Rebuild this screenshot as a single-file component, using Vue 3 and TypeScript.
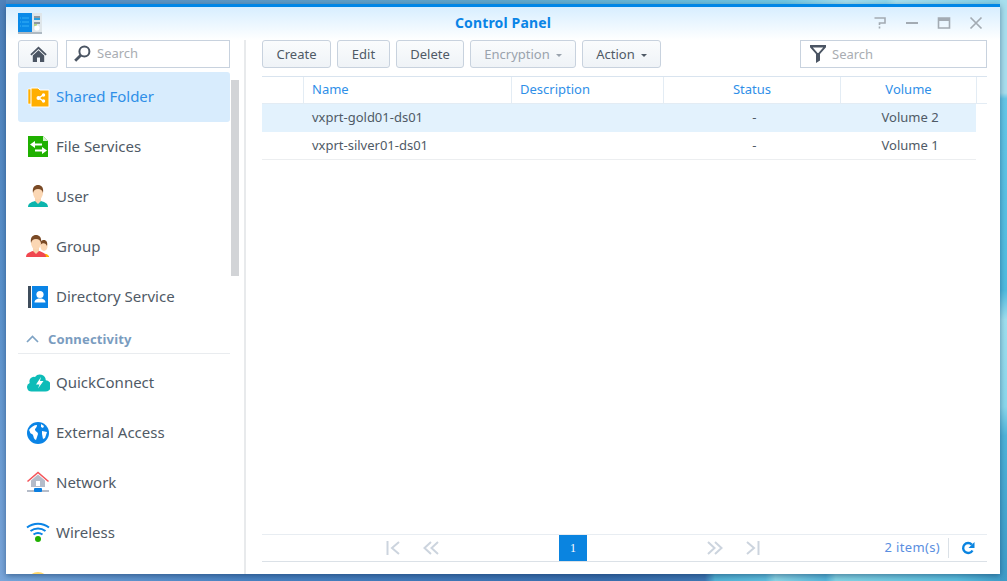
<template>
  <div class="desktop">
    <div class="wall wall-top"></div>
    <div class="wall wall-bottom"></div>
    <div class="wall wall-left"></div>
    <div class="wall wall-right"></div>
    <div class="window">
      <header class="titlebar">
        <svg class="app-logo" width="24" height="21" viewBox="0 0 24 21">
          <rect x="0" y="0" width="14" height="19" fill="#0a8ae8" />
          <rect x="14" y="0" width="10" height="19" fill="#dfe6ea" />
          <rect x="0" y="19" width="24" height="2" fill="#aeb9c2" />
          <path d="M2 5h9M2 9h9M2 13h9" stroke="#37b1f6" stroke-width="1" stroke-dasharray="1 1 7 1" />
          <path d="M16 4h6" stroke="#3e4a57" stroke-width="1" />
          <path d="M16 6h6" stroke="#2aa0df" stroke-width="2" />
          <path d="M16 10h6" stroke="#3e4a57" stroke-width="1" />
          <path d="M16 12h3" stroke="#86c21f" stroke-width="1" />
          <circle cx="19" cy="15" r="2.6" fill="#fff" />
        </svg>
        <span class="title">Control Panel</span>
        <div class="win-buttons">
          <svg width="14" height="14" viewBox="0 0 14 14"><path d="M1.500 2h10.500v5H6.500v2M6.500 10.500v2" fill="none" stroke="#a3abb3" stroke-width="1.600" /></svg>
          <svg width="14" height="14" viewBox="0 0 14 14"><path d="M1 7h12" stroke="#a3abb3" stroke-width="2" /></svg>
          <svg width="14" height="14" viewBox="0 0 14 14"><path d="M1.500 2h11v10h-11z" fill="none" stroke="#a3abb3" stroke-width="1.600" /><path d="M1 3.500h12" stroke="#a3abb3" stroke-width="3" /></svg>
          <svg width="14" height="14" viewBox="0 0 14 14"><path d="M1.500 1.500l11 11M12.500 1.500l-11 11" stroke="#a3abb3" stroke-width="1.700" /></svg>
        </div>
      </header>

      <div class="body">
        <aside class="sidebar">
          <div class="side-tools">
            <button class="btn home-btn" type="button">
              <svg width="17" height="16" viewBox="0 0 17 16"><path d="M8.500 0.500L0.300 8.200l1.200 1.200L8.500 3l7 6.400 1.200-1.200z" fill="#4b5563" /><path d="M2.800 9.400L8.500 4.200l5.700 5.200V16H10v-4.500H7V16H2.800z" fill="#4b5563" /></svg>
            </button>
            <label class="search side-search">
              <svg width="17" height="17" viewBox="0 0 17 17"><circle cx="10.400" cy="6.600" r="5" fill="none" stroke="#4b5563" stroke-width="2" /><path d="M6.800 10.200L1.200 15.800" stroke="#4b5563" stroke-width="2.800" /></svg>
              <span>Search</span>
            </label>
          </div>

          <nav class="nav">
            <template v-for="item in navItems" :key="item.label">
              <div v-if="item.section" class="section">
                <svg width="13" height="8" viewBox="0 0 13 8"><path d="M1 7l5.500-5.500L12 7" fill="none" stroke="#7fa3c4" stroke-width="1.700" /></svg>
                <span>{{ item.label }}</span>
              </div>
              <div v-else class="nav-item" :class="{ active: item.active }">
                <svg class="nav-icon" width="24" height="24" viewBox="0 0 24 24" v-html="item.icon"></svg>
                <span>{{ item.label }}</span>
              </div>
            </template>
          </nav>
          <div class="scroll-thumb"></div>
        </aside>

        <main class="content">
          <div class="toolbar">
            <button v-for="b in buttons" :key="b.label" class="btn tool-btn" :class="[b.cls, { disabled: b.disabled }]" type="button">
              {{ b.label }}
              <i v-if="b.caret" class="caret"></i>
            </button>
            <label class="search filter">
              <svg width="16" height="18" viewBox="0 0 16 18"><path d="M0 0h16v2.200L10 9v6.500L6 18V9L0 2.200zM2.800 2.400L7.600 8h.8l4.800-5.600z" fill="#4b5563" fill-rule="evenodd" /></svg>
              <span>Search</span>
            </label>
          </div>

          <div class="grid">
            <div class="row head">
              <div class="cell c-check"></div>
              <div class="cell c-name">Name</div>
              <div class="cell c-desc">Description</div>
              <div class="cell c-status">Status</div>
              <div class="cell c-vol">Volume</div>
            </div>
            <div v-for="r in rows" :key="r.name" class="row data" :class="{ selected: r.selected }">
              <div class="cell c-check"></div>
              <div class="cell c-name">{{ r.name }}</div>
              <div class="cell c-desc"></div>
              <div class="cell c-status">-</div>
              <div class="cell c-vol">{{ r.volume }}</div>
            </div>
          </div>

          <footer class="pager">
            <div class="page-btn">
              <svg width="14" height="14" viewBox="0 0 14 14"><path d="M1.500 0v14" stroke="#ccd4de" stroke-width="2" /><path d="M13 1L6 7l7 6" fill="none" stroke="#ccd4de" stroke-width="2" /></svg>
            </div>
            <div class="page-btn">
              <svg width="16" height="14" viewBox="0 0 16 14"><path d="M8 1L1.500 7 8 13M15 1L8.500 7l6.500 6" fill="none" stroke="#ccd4de" stroke-width="2" /></svg>
            </div>
            <div class="page-mid"><span class="page-num">1</span></div>
            <div class="page-btn">
              <svg width="16" height="14" viewBox="0 0 16 14"><path d="M1 1l6.500 6L1 13M8 1l6.500 6L8 13" fill="none" stroke="#ccd4de" stroke-width="2" /></svg>
            </div>
            <div class="page-btn">
              <svg width="14" height="14" viewBox="0 0 14 14"><path d="M12.500 0v14" stroke="#ccd4de" stroke-width="2" /><path d="M1 1l7 6-7 6" fill="none" stroke="#ccd4de" stroke-width="2" /></svg>
            </div>
            <div class="page-info">2 item(s)</div>
            <div class="page-refresh">
              <svg width="14" height="14" viewBox="0 0 14 14"><path d="M11.500 9.500A5 5 0 1 1 10.800 3.600" fill="none" stroke="#0a84e0" stroke-width="2.400" /><path d="M13.500 1v6h-6z" fill="#0a84e0" /></svg>
            </div>
          </footer>
        </main>
      </div>
    </div>
  </div>
</template>

<script setup lang="ts">
interface NavItem {
  label: string;
  icon?: string;
  active?: boolean;
  section?: boolean;
}

const face = (cx: number, cy: number, shirt: string) => `
  <path d="M${cx - 10} ${cy + 17}c0-4 4-5 7-6h6c3 1 7 2 7 6z" fill="${shirt}"/>
  <path d="M${cx - 3} ${cy + 8}h6v3l-3 3-3-3z" fill="#f9d3ae"/>
  <ellipse cx="${cx}" cy="${cy + 3}" rx="5" ry="6.500" fill="#fbd7b4"/>
  <path d="M${cx - 5} ${cy + 3}c-1-6 2-8 5-8s6 2 5 8c-1-3-2-4-5-4s-4 1-5 4z" fill="#7a4a26"/>`;

const navItems: NavItem[] = [
  {
    label: "Shared Folder",
    active: true,
    icon: `<path d="M2 4h5l1 1v14H2z" fill="#ffae00" stroke="#fff" stroke-width=".6"/>
      <path d="M5 3h7l2 2h9v17H5z" fill="#ffae00" stroke="#fff" stroke-width="1"/>
      <path d="M17 10l-4 3 4 3" fill="none" stroke="#fff" stroke-width="1.400"/>
      <circle cx="12.500" cy="13" r="2" fill="#fff"/><circle cx="17.500" cy="10" r="1.700" fill="#fff"/><circle cx="17.500" cy="16" r="1.700" fill="#fff"/>`,
  },
  {
    label: "File Services",
    icon: `<path d="M2 1h15l5 5v16H2z" fill="#1fb000"/><path d="M17 1v5h5z" fill="#d8f1d0"/>
      <path d="M8 9.500h8M9 15.500h8" stroke="#fff" stroke-width="2"/>
      <path d="M9 6L4 9.500 9 13zM16 12l5 3.500-5 3.500z" fill="#fff"/>`,
  },
  { label: "User", icon: face(12, 5, "#0cb5ad") },
  {
    label: "Group",
    icon: `<path d="M15 22c2-4 5-4 8-1v1z" fill="#ffae00"/>
      <ellipse cx="18" cy="11" rx="3.600" ry="5" fill="#fbd7b4"/>
      <path d="M14 10c0-4 2-5 4-5s4 2 3 6c-1-3-4-4-7-1z" fill="#7a4a26"/>${face(10, 5, "#f0474f")}`,
  },
  {
    label: "Directory Service",
    icon: `<rect x="2" y="1" width="3" height="22" fill="#3f4d5c"/><rect x="6" y="1" width="16" height="22" fill="#0a84e6"/>
      <circle cx="14" cy="9.500" r="3.600" fill="#fff"/><path d="M8.500 17.500c0-3 3-3.500 3.500-4h4c.5.5 3.500 1 3.500 4z" fill="#fff"/>`,
  },
  { label: "Connectivity", section: true },
  {
    label: "QuickConnect",
    icon: `<path d="M5.500 20.500a4.500 4.500 0 0 1-1.800-8.600 4.500 4.500 0 0 1 5.300-5.900 6 6 0 0 1 10.800 3.200 5.600 5.600 0 0 1-.8 11.300z" fill="#0dbcb8"/>
      <path d="M15 6l-5 7.500h3.500l-1.500 4 5.500-7.500h-3.500z" fill="#fff"/>`,
  },
  {
    label: "External Access",
    icon: `<circle cx="12" cy="12" r="11" fill="#0a84e6"/>
      <path d="M3 9c2-3 5-5 8-5 0 3-2 3-2 5 1 2 3 2 3 4l-2 6c-3-1-2-5-4-6-2 0-2-3-3-4zM15 3l3 2-1 2-2-1zM16 10l5 1-2 6-2 1-1-5z" fill="#fff"/>`,
  },
  {
    label: "Network",
    icon: `<path d="M5 9.500L12 3.500l7 6V16H5z" fill="#b5bcc9"/><rect x="10" y="10" width="4" height="5" fill="#fff"/>
      <path d="M1.500 10.500L12 1.500l10.500 9" fill="none" stroke="#f4555a" stroke-width="1.600"/>
      <rect x="1" y="19" width="22" height="2" fill="#b5bcc9"/><rect x="8" y="17" width="8" height="4" rx="1" fill="#0a7ee0"/>`,
  },
  {
    label: "Wireless",
    icon: `<path d="M1 6.500c6.500-5 15.500-5 22 0M4.500 10c4.500-3.500 10.500-3.500 15 0M7.500 13.500c3-2 6-2 9 0" fill="none" stroke="#0a84e6" stroke-width="2"/>
      <circle cx="12" cy="18" r="3" fill="#1fb000"/>`,
  },
  {
    label: "",
    icon: `<circle cx="12" cy="12" r="11" fill="#ffd76a"/>`,
  },
];

const buttons = [
  { label: "Create", cls: "b-create" },
  { label: "Edit", cls: "b-edit" },
  { label: "Delete", cls: "b-delete" },
  { label: "Encryption", cls: "b-encrypt", caret: true, disabled: true },
  { label: "Action", cls: "b-action", caret: true },
];

const rows = [
  { name: "vxprt-gold01-ds01", volume: "Volume 2", selected: true },
  { name: "vxprt-silver01-ds01", volume: "Volume 1", selected: false },
];
</script>

<style>
html,
body {
  margin: 0;
  overflow: hidden;
}
</style>

<style scoped>
.desktop {
  position: relative;
  width: 1007px;
  height: 581px;
  overflow: hidden;
  background: #4f8ac4;
  font-family: "Noto Sans", "Open Sans", sans-serif;
}
.wall {
  position: absolute;
}
.wall-top {
  left: 0;
  right: 0;
  top: 0;
  height: 6px;
  background: linear-gradient(90deg, #5a8cc0 0%, #60a8cc 50%, #70c8e4 78%, #a4dded 84%, #8fd8ec 88%, #a8e0ee 89%, #7fd0e8 100%);
}
.wall-bottom {
  left: 0;
  right: 0;
  bottom: 0;
  height: 8px;
  background: linear-gradient(90deg, #78a8dc 0%, #4a84c4 25%, #3a70b0 60%, #3f78b4 70%, #55b6d8 71%, #60c0e0 76%, #8ed8e8 77%, #58b8dc 82%, #86d6e6 83%, #5cc0e0 95%, #3f9cc8 100%);
}
.wall-left {
  left: 0;
  top: 0;
  bottom: 0;
  width: 6px;
  background: linear-gradient(#4f82bb, #5a92cc 50%, #7aa6da);
}
.wall-right {
  right: 0;
  top: 0;
  bottom: 0;
  width: 7px;
  background: linear-gradient(#a8dfee 0 16%, #66c8e8 17%, #4fbce0 50%, #9fe0ef 55%, #8ad8ec 70%, #4fb4da 75%, #3f9cc8 100%);
}
.window {
  position: absolute;
  left: 6px;
  top: 4px;
  width: 994px;
  height: 570px;
  box-sizing: border-box;
  border-top: 3px solid #0086e6;
  background: #fff;
  box-shadow: 0 2px 6px rgba(0, 30, 70, 0.45);
  display: flex;
  flex-direction: column;
}
.titlebar {
  flex: none;
  height: 33px;
  position: relative;
  display: flex;
  align-items: center;
  justify-content: center;
  background: linear-gradient(#d7eeff, #ffffff);
}
.app-logo {
  position: absolute;
  left: 12px;
  top: 6px;
}
.title {
  font-size: 14px;
  font-weight: 700;
  letter-spacing: 0.15px;
  color: #0a84e6;
  padding-bottom: 3px;
}
.win-buttons {
  position: absolute;
  left: 867px;
  top: 9px;
  display: flex;
  gap: 18px;
}
.body {
  flex: 1;
  min-height: 0;
  display: flex;
}
.sidebar {
  position: relative;
  flex: none;
  width: 238px;
  border-right: 2px solid #e8eaec;
  overflow: hidden;
}
.side-tools {
  display: flex;
  gap: 8px;
  padding-left: 12px;
  width: 212px;
}
.btn {
  height: 28px;
  box-sizing: border-box;
  border: 1px solid #c8d2de;
  border-radius: 3px;
  background: linear-gradient(#fafcfd, #eff3f7);
  font-family: inherit;
  font-size: 13px;
  color: #4f5a66;
  padding: 0;
  display: inline-flex;
  align-items: center;
  justify-content: center;
}
.home-btn {
  width: 40px;
  flex: none;
}
.search {
  height: 28px;
  box-sizing: border-box;
  border: 1px solid #c8d2de;
  background: #fff;
  display: flex;
  align-items: center;
  gap: 6px;
  font-size: 13px;
  color: #a9adb2;
}
.side-search {
  flex: 1;
  padding: 0 0 2px 7px;
}
.nav {
  margin: 4px 0 0 12px;
  width: 212px;
}
.nav-item {
  height: 50px;
  box-sizing: border-box;
  display: flex;
  align-items: center;
  gap: 6px;
  padding-left: 8px;
  border-radius: 3px;
  font-size: 15px;
  color: #4f5a66;
}
.nav-item span {
  padding-bottom: 2px;
}
.nav-item.active {
  background: #d8ecfd;
  color: #2f8fe8;
}
.section {
  height: 32px;
  box-sizing: border-box;
  margin-bottom: 4px;
  padding: 2px 0 0 8px;
  border-bottom: 1px solid #e9ecef;
  display: flex;
  align-items: center;
  gap: 9px;
  font-size: 13px;
  font-weight: 700;
  letter-spacing: 0.15px;
  color: #7a9cc0;
}
.nav-icon {
  flex: none;
}
.scroll-thumb {
  position: absolute;
  left: 225px;
  top: 40px;
  width: 8px;
  height: 196px;
  background: #d2d4d7;
}
.content {
  flex: 1;
  min-width: 0;
  padding: 0 13px 0 16px;
  display: flex;
  flex-direction: column;
}
.toolbar {
  display: flex;
  gap: 6px;
  height: 28px;
}
.b-create {
  width: 69px;
}
.b-edit {
  width: 53px;
}
.b-delete {
  width: 68px;
}
.b-encrypt {
  width: 106px;
}
.b-action {
  width: 79px;
}
.tool-btn.disabled {
  color: #9aa3ad;
}
.caret {
  width: 0;
  height: 0;
  margin-left: 6px;
  margin-top: 2px;
  border-left: 3px solid transparent;
  border-right: 3px solid transparent;
  border-top: 3px solid #4f5a66;
}
.disabled .caret {
  border-top-color: #9aa3ad;
}
.filter {
  width: 187px;
  margin-left: auto;
  padding-left: 9px;
}
.grid {
  flex: 1;
  margin-top: 8px;
  border-top: 1px solid #d9e4ef;
}
.row {
  display: flex;
  font-size: 13px;
  color: #4f5a66;
}
.cell {
  box-sizing: border-box;
  display: flex;
  align-items: center;
}
.c-check {
  width: 42px;
}
.c-name {
  width: 208px;
  padding-left: 8px;
}
.c-desc {
  width: 152px;
  padding-left: 8px;
}
.c-status {
  width: 177px;
  justify-content: center;
}
.c-vol {
  width: 136px;
  justify-content: center;
}
.head {
  height: 27px;
  box-sizing: border-box;
  color: #2f8fe8;
  border-bottom: 1px solid #e3ecf4;
}
.head .cell {
  border-right: 1px solid #e3ecf4;
  padding-bottom: 3px;
}
.head::after {
  content: "";
  flex: 1;
}
.data {
  width: 714px;
  height: 28px;
  box-sizing: border-box;
  border-bottom: 1px solid #eceef0;
}
.data .cell {
  padding-bottom: 1px;
}
.data.selected .cell {
  padding-bottom: 3px;
}
.data .c-status {
  padding-left: 5px;
}
.data .c-vol {
  padding-left: 4px;
}
.data.selected {
  background: #e3f2fd;
  border-bottom: none;
}
.pager {
  flex: none;
  height: 28px;
  margin-bottom: 12px;
  box-sizing: border-box;
  border-top: 1px solid #e8edf2;
  border-bottom: 1px solid #dbe1e7;
  padding-left: 112px;
  display: flex;
  align-items: center;
}
.page-btn {
  width: 38px;
  display: flex;
  justify-content: center;
}
.page-mid {
  width: 246px;
  display: flex;
  justify-content: center;
  align-self: flex-start;
}
.page-num {
  width: 28px;
  height: 26px;
  display: flex;
  align-items: center;
  justify-content: center;
  background: #0a84e0;
  color: #fff;
  font-size: 12px;
  font-family: "Liberation Serif", serif;
}
.page-info {
  margin-left: auto;
  padding-right: 8px;
  font-size: 13px;
  letter-spacing: 0.35px;
  color: #5a8ee0;
  border-right: 1px solid #dbe1e7;
  height: 20px;
  line-height: 18px;
}
.page-refresh {
  width: 38px;
  display: flex;
  justify-content: center;
}
</style>
